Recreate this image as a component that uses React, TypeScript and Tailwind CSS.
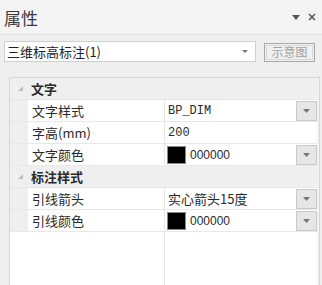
import React from "react";

const DropBtn = () => (
  <div className="w-[21px] h-[20px] mt-[1px] border border-[#c9c9c9] bg-[#e6e6e6] flex items-center justify-center shrink-0">
    <svg width="7" height="4" viewBox="0 0 7 4"><path d="M0 0H7L3.5 4Z" fill="#777" /></svg>
  </div>
);

const Category = ({ label }: { label: string }) => (
  <div className="flex h-[22px] bg-[#efefef] border-b border-[#e6e6e6]">
    <div className="w-[18px] flex items-center justify-end pr-[5px] shrink-0">
      <svg width="5" height="5" viewBox="0 0 5 5"><path d="M5 0V5H0Z" fill="#bdbdbd" /></svg>
    </div>
    <div className="pl-[3px] flex items-center font-bold text-[13px] text-[#2a2a2a]">{label}</div>
  </div>
);

const Row = ({ name, children, drop }: { name: string; children: React.ReactNode; drop?: boolean }) => (
  <div className="flex h-[22px] border-b border-[#e8e8e8]">
    <div className="w-[18px] bg-[#efefef] shrink-0" />
    <div className="w-[137px] pl-[4px] flex items-center text-[13px] text-[#2a2a2a] border-r border-[#e6e6e6] shrink-0 bg-white">{name}</div>
    <div className="flex-1 flex bg-white pl-[2px]">
      <div className="flex-1 flex items-center text-[12px] text-[#2a2a2a] pl-[1px]">{children}</div>
      {drop && <DropBtn />}
    </div>
  </div>
);

const Swatch = ({ v }: { v: string }) => (
  <div className="flex items-center gap-[4px] -ml-[1px]">
    <div className="w-[19px] h-[18px] bg-black border border-[#888]" />
    <span style={{ fontFamily: '"Liberation Sans", sans-serif' }} className="text-[12px]">{v}</span>
  </div>
);

export default function App() {
  return (
    <div
      className="w-[322px] h-[285px] bg-[#efefef] overflow-hidden flex flex-col"
      style={{ fontFamily: '"Noto Sans CJK SC", "Noto Sans", sans-serif' }}
    >
      <div className="h-[35px] bg-[#f4f4f4] border-b border-[#e2e2e2] flex items-center justify-between pl-[4px] pr-[6px] shrink-0">
        <span className="text-[17px] text-[#3c3c3c] leading-none">属性</span>
        <div className="flex items-center gap-[8px] text-[#555]">
          <svg width="8" height="5" viewBox="0 0 8 5"><path d="M0 0H8L4 5Z" fill="#555" /></svg>
          <svg width="8" height="8" viewBox="0 0 8 8"><path d="M1 1L7 7M7 1L1 7" stroke="#555" strokeWidth="1.5" /></svg>
        </div>
      </div>
      <div className="flex items-center mt-[6px] shrink-0">
        <div className="ml-[4px] w-[252px] h-[21px] bg-white border border-[#d0d0d0] flex items-center justify-between pl-[2px] pr-[7px]">
          <span className="text-[13px] text-[#222] leading-none">三维标高标注(1)</span>
          <svg width="6" height="3" viewBox="0 0 6 3"><path d="M0 0H6L3 3Z" fill="#777" /></svg>
        </div>
        <div className="ml-[8px] w-[51px] h-[19px] mt-[1px] border border-[#a8a8a8] bg-[#f0f0f0] flex items-center justify-center p-[1px]">
          <div className="w-full h-full border border-[#d8d8d8] flex items-center justify-center text-[12px] text-[#a0a0a0] leading-none">示意图</div>
        </div>
      </div>
      <div className="mt-[15px] ml-[9px] w-[311px] flex-1 border-l border-t border-r border-[#d6d6d6] bg-[#f2f2f2] pr-[2px]">
        <div className="bg-white h-full flex flex-col">
          <Category label="文字" />
          <Row name="文字样式" drop>
            <span style={{ fontFamily: '"Liberation Mono", monospace' }}>BP_DIM</span>
          </Row>
          <Row name="字高(mm)">
            <span style={{ fontFamily: '"Liberation Mono", monospace' }}>200</span>
          </Row>
          <Row name="文字颜色" drop>
            <Swatch v="000000" />
          </Row>
          <Category label="标注样式" />
          <Row name="引线箭头" drop>
            <span className="text-[13px]">实心箭头15度</span>
          </Row>
          <Row name="引线颜色" drop>
            <Swatch v="000000" />
          </Row>
          <div className="flex-1 flex">
            <div className="w-[155px] border-r border-[#e6e6e6]" />
            <div className="flex-1" />
          </div>
        </div>
      </div>
    </div>
  );
}
